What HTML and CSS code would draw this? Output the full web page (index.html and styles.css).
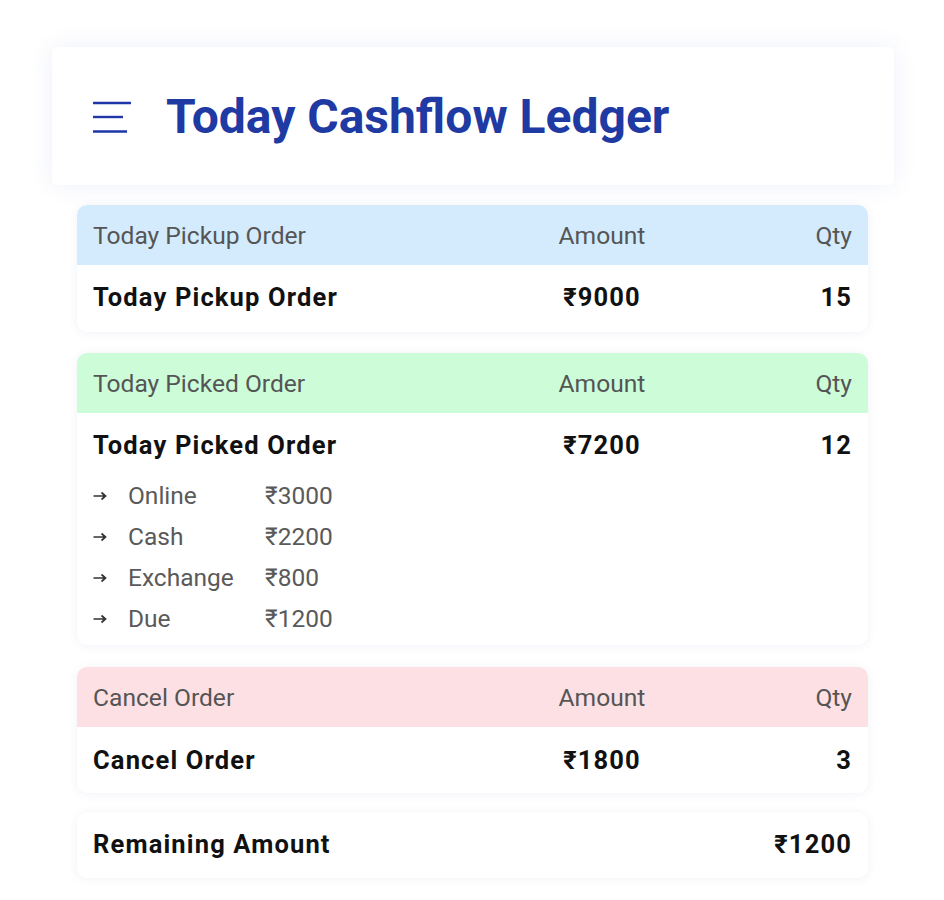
FILE: index.html
```html
<!DOCTYPE html>
<html>
<head>
<meta charset="utf-8">
<link rel="stylesheet" href="styles.css">
</head>
<body>
<div class="page">
  <header class="topbar">
    <svg class="menu" width="40" height="32" viewBox="0 0 40 32">
      <line x1="1" y1="2" x2="39" y2="2" />
      <line x1="1" y1="16" x2="31" y2="16" />
      <line x1="1" y1="30.5" x2="35" y2="30.5" />
    </svg>
    <h1 class="title">Today Cashflow Ledger</h1>
  </header>

  <section class="card">
    <div class="head blue">
      <span>Today Pickup Order</span><span class="amt">Amount</span><span class="qty">Qty</span>
    </div>
    <div class="row">
      <span>Today Pickup Order</span><span class="amt">₹9000</span><span class="qty">15</span>
    </div>
  </section>

  <section class="card card-picked">
    <div class="head green">
      <span>Today Picked Order</span><span class="amt">Amount</span><span class="qty">Qty</span>
    </div>
    <div class="row row-top">
      <span>Today Picked Order</span><span class="amt">₹7200</span><span class="qty">12</span>
    </div>
    <ul class="sub">
      <li><svg class="arrow" width="14" height="10" viewBox="0 0 14 10"><path d="M0.5 5H12.5M8.5 1.5L12.5 5L8.5 8.5"/></svg><span>Online</span><span>₹3000</span></li>
      <li><svg class="arrow" width="14" height="10" viewBox="0 0 14 10"><path d="M0.5 5H12.5M8.5 1.5L12.5 5L8.5 8.5"/></svg><span>Cash</span><span>₹2200</span></li>
      <li><svg class="arrow" width="14" height="10" viewBox="0 0 14 10"><path d="M0.5 5H12.5M8.5 1.5L12.5 5L8.5 8.5"/></svg><span>Exchange</span><span>₹800</span></li>
      <li><svg class="arrow" width="14" height="10" viewBox="0 0 14 10"><path d="M0.5 5H12.5M8.5 1.5L12.5 5L8.5 8.5"/></svg><span>Due</span><span>₹1200</span></li>
    </ul>
  </section>

  <section class="card">
    <div class="head pink">
      <span>Cancel Order</span><span class="amt">Amount</span><span class="qty">Qty</span>
    </div>
    <div class="row row-last">
      <span>Cancel Order</span><span class="amt">₹1800</span><span class="qty">3</span>
    </div>
  </section>

  <section class="card card-total">
    <div class="total">
      <span>Remaining Amount</span><span>₹1200</span>
    </div>
  </section>
</div>
</body>
</html>
```

FILE: styles.css
```css
* { box-sizing: border-box; }
html, body { margin: 0; padding: 0; background: #ffffff; }
body { font-family: Roboto, "Liberation Sans", sans-serif; color: #111; }

.page {
  width: 944px;
  padding: 47px 0 0 0;
  display: flex;
  flex-direction: column;
  align-items: flex-start;
}

.topbar {
  margin-left: 52px;
  width: 842px;
  height: 138px;
  background: #fff;
  border-radius: 6px;
  box-shadow: 0 0 24px rgba(70, 90, 190, 0.09);
  display: flex;
  align-items: center;
  padding-left: 40px;
  margin-bottom: 20px;
}
.menu { stroke: #1e36a8; stroke-width: 2.4; flex: none; margin-right: 34px; margin-top: 1px; }
.title {
  margin: 0;
  font-size: 48px;
  font-weight: 700;
  color: #1f3aa3;
  letter-spacing: 0;
}

.card {
  margin-left: 77px;
  width: 791px;
  background: #fff;
  border-radius: 10px;
  box-shadow: 0 1px 10px rgba(80, 90, 170, 0.08);
  overflow: hidden;
  margin-bottom: 21px;
}
.card-picked { margin-bottom: 22px; }
.card-total { margin-top: -2px; }

.head, .row {
  display: grid;
  grid-template-columns: 1fr 140px 180px;
  align-items: center;
  padding: 0 16px;
}
.head {
  height: 60px;
  font-size: 24.6px;
  color: #555;
}
.head.blue { background: #d3ebfd; }
.head.green { background: #cdfcd9; }
.head.pink { background: #fde0e3; }

.amt { text-align: center; }
.qty { text-align: right; }

.row {
  height: 67px;
  padding-bottom: 3px;
  font-size: 25.5px;
  font-weight: 700;
  letter-spacing: 1.15px;
  color: #111;
}
.row-top { height: 64px; padding-bottom: 1px; }
.row-last { height: 66px; padding-bottom: 1px; }

.sub {
  list-style: none;
  margin: 0;
  padding: 0 16px 6px;
}
.sub li {
  display: grid;
  grid-template-columns: 35px 137px auto;
  height: 41px;
  align-items: center;
  font-size: 24.5px;
  color: #5a5a5a;
}
.sub li:first-child { margin-top: -2px; }
.sub .arrow { fill: none; stroke: #333; stroke-width: 1.7; margin-top: 1px; }

.total {
  height: 66px;
  padding: 0 16px 2px;
  display: flex;
  justify-content: space-between;
  align-items: center;
  font-size: 25.5px;
  font-weight: 700;
  letter-spacing: 1.15px;
  color: #111;
}
```
